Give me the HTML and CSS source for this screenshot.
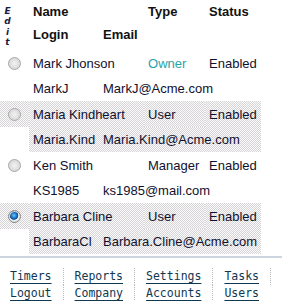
FILE: index.html
```html
<!DOCTYPE html>
<html>
<head>
<meta charset="utf-8">
<link rel="stylesheet" href="styles.css">
</head>
<body>
<table class="users">
  <colgroup>
    <col class="c0"><col class="c1"><col class="c2"><col class="c3"><col class="c4">
  </colgroup>
  <thead>
    <tr class="h1">
      <th rowspan="2" class="edit"><div class="vert">E<br>d<br>i<br>t</div></th>
      <th colspan="2">Name</th>
      <th>Type</th>
      <th>Status</th>
    </tr>
    <tr class="h2">
      <th>Login</th>
      <th colspan="3">Email</th>
    </tr>
  </thead>
  <tbody>
    <tr class="l1">
      <td class="rad"><span class="radio"></span></td>
      <td colspan="2">Mark Jhonson</td>
      <td class="owner">Owner</td>
      <td>Enabled</td>
    </tr>
    <tr class="l2">
      <td class="blank"></td>
      <td>MarkJ</td>
      <td colspan="3">MarkJ@Acme.com</td>
    </tr>
    <tr class="l1 shade">
      <td class="rad"><span class="radio"></span></td>
      <td colspan="2">Maria Kindheart</td>
      <td>User</td>
      <td>Enabled</td>
    </tr>
    <tr class="l2 shade">
      <td class="blank"></td>
      <td>Maria.Kind</td>
      <td colspan="3">Maria.Kind@Acme.com</td>
    </tr>
    <tr class="l1">
      <td class="rad"><span class="radio"></span></td>
      <td colspan="2">Ken Smith</td>
      <td>Manager</td>
      <td>Enabled</td>
    </tr>
    <tr class="l2">
      <td class="blank"></td>
      <td>KS1985</td>
      <td colspan="3">ks1985@mail.com</td>
    </tr>
    <tr class="l1 shade">
      <td class="rad"><span class="radio on"></span></td>
      <td colspan="2">Barbara Cline</td>
      <td>User</td>
      <td>Enabled</td>
    </tr>
    <tr class="l2 shade">
      <td class="blank"></td>
      <td>BarbaraCl</td>
      <td colspan="3">Barbara.Cline@Acme.com</td>
    </tr>
  </tbody>
</table>
<div class="sep"></div>
<table class="nav">
  <tr>
    <td><a href="#">Timers</a></td>
    <td><a href="#">Reports</a></td>
    <td><a href="#">Settings</a></td>
    <td><a href="#">Tasks</a></td>
  </tr>
  <tr>
    <td><a href="#">Logout</a></td>
    <td><a href="#">Company</a></td>
    <td><a href="#">Accounts</a></td>
    <td class="last"><a href="#">Users</a></td>
  </tr>
</table>
</body>
</html>
```

FILE: styles.css
```css
html, body {
  margin: 0;
  padding: 0;
  background: #ffffff;
}
body {
  font-family: "Liberation Sans", Arial, sans-serif;
  font-size: 13px;
  color: #10102e;
  overflow: hidden;
}
.users {
  border-collapse: collapse;
  border-spacing: 0;
  table-layout: fixed;
  width: 261px;
}
.c0 { width: 29px; }
.c1 { width: 70px; }
.c2 { width: 45px; }
.c3 { width: 61px; }
.c4 { width: 56px; }
.users th, .users td {
  padding: 0 0 0 4px;
  text-align: left;
  white-space: nowrap;
  overflow: visible;
  vertical-align: middle;
}
.users th {
  font-weight: bold;
  color: #111111;
}
.h1 th { height: 22px; }
.h2 th { height: 25px; padding-bottom: 3px; }
.users th.edit {
  padding: 0;
  vertical-align: middle;
}
.vert {
  width: 15px;
  text-align: center;
  font-family: "DejaVu Sans", sans-serif;
  font-size: 9px;
  font-weight: bold;
  font-style: italic;
  line-height: 10.5px;
  color: #1a1a40;
  padding-top: 3px;
}
.l1 td { height: 26px; }
.l2 td { height: 25px; }
.shade td {
  background-color: #ebebeb;
  background-image: repeating-conic-gradient(#d6d4d6 0 25%, #fbfbfb 0 50%);
  background-size: 2px 2px;
}
.shade td.blank {
  background: none;
}
.users td.rad {
  padding: 0 0 0 8px;
}
.radio {
  display: block;
  width: 11px;
  height: 11px;
  border-radius: 50%;
  border: 1px solid #a8a8a8;
  background: radial-gradient(circle at 50% 50%, #f2f2f2 0, #e2e2e2 45%, #cfcfcf 100%);
  box-shadow: inset 0 0 0 1px #dcdcdc;
}
.radio.on {
  border-color: #8a8a8a;
  background: radial-gradient(circle at 45% 40%, #6ec4f0 0, #1a7ac8 30%, #0c4a90 45%, #f4f4f4 52%, #dcdcdc 100%);
}
.owner { color: #2aa2aa; }
.sep {
  height: 2px;
  margin-top: 2px;
  background: #cdd6e0;
}
.nav {
  border-collapse: separate;
  border-spacing: 0;
  margin-top: 10px;
}
.nav td {
  padding: 0 11px 0 10px;
  border-right: 1px dotted #b8b8b8;
  font-family: "DejaVu Sans Mono", "Liberation Mono", monospace;
  font-size: 11.5px;
  line-height: 17px;
  height: 17px;
  white-space: nowrap;
}
.nav td + td { padding-left: 11px; }
.nav td.last { border-right: none; }
.nav a {
  color: #10384f;
  text-decoration: underline;
  text-underline-offset: 3px;
}
```
